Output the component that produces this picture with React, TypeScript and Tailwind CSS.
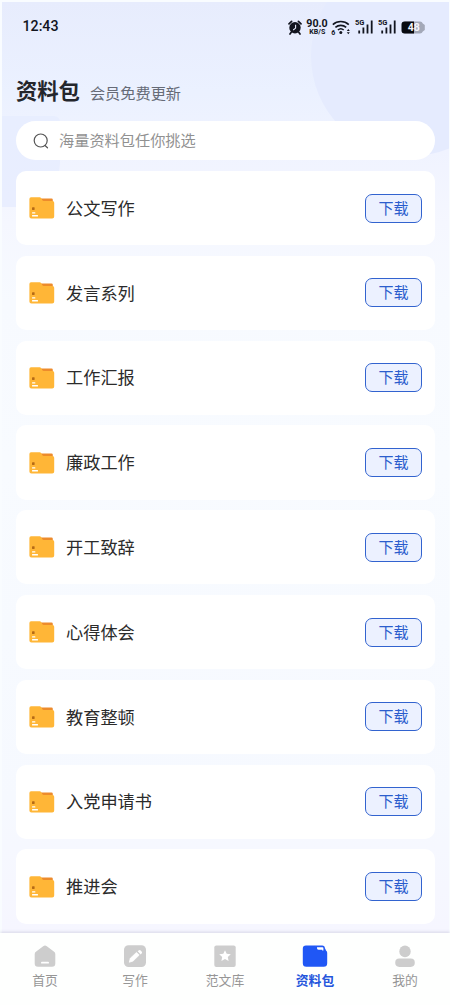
import React from 'react';

// 资料包列表
const packages: string[] = [
  '公文写作',
  '发言系列',
  '工作汇报',
  '廉政工作',
  '开工致辞',
  '心得体会',
  '教育整顿',
  '入党申请书',
  '推进会',
];

interface TabItem {
  label: string;
  icon: React.ReactElement;
  active?: boolean;
}

// 底部导航
const tabs: TabItem[] = [
  {
    label: '首页',
    icon: (
      <svg width="24" height="24" viewBox="0 0 24 24">
        <path d="M10.2 2.2a3 3 0 0 1 3.6 0l7 5.2A3.2 3.2 0 0 1 22.3 10v9.500a3.300 3.300 0 0 1-3.300 3.300H5a3.300 3.300 0 0 1-3.300-3.300V10a3.200 3.200 0 0 1 1.500-2.600z" fill="#cdcdcd" />
        <rect x="8" y="17.800" width="8" height="1.800" rx="0.900" fill="#fff" />
      </svg>
    ),
  },
  {
    label: '写作',
    icon: (
      <svg width="24" height="24" viewBox="0 0 24 24">
        <rect x="1" y="1.300" width="22" height="21.700" rx="4.500" fill="#cdcdcd" />
        <path d="M6.300 18.200l1-3.900 6.200-5.900 2.700 2.700-6.200 6z" fill="#fff" stroke="#fff" strokeWidth="0.800" strokeLinejoin="round" />
        <path d="M14.700 7.300l0.900-0.800a1.500 1.500 0 0 1 2.100 0l0.900 0.900a1.500 1.500 0 0 1 0 2.100l-0.900 0.900z" fill="#fff" />
      </svg>
    ),
  },
  {
    label: '范文库',
    icon: (
      <svg width="24" height="24" viewBox="0 0 24 24">
        <rect x="1.300" y="1.600" width="21.400" height="21.400" rx="2" fill="#cdcdcd" />
        <path d="M12 6.200l1.700 3.600 4.100 0.500-3 2.700 0.800 4.100-3.600-2-3.600 2 0.800-4.100-3-2.700 4.100-0.500z" fill="#fff" />
      </svg>
    ),
  },
  {
    label: '资料包',
    active: true,
    icon: (
      <svg width="26" height="24" viewBox="0 0 26 24">
        <path d="M4 1.500h8.500l3 2.500h6a2.800 2.800 0 0 1 2.500 2.600c0.800 0.500 1.200 1.200 1.200 2.200v10.400a3.500 3.500 0 0 1-3.500 3.500H4.300a3.500 3.500 0 0 1-3.500-3.500V4.700A3.200 3.200 0 0 1 4 1.500z" fill="#2057f5" />
        <path d="M12.500 1.500H20a2.800 2.800 0 0 1 2.900 2.700v3.500h-7z" fill="#2057f5" />
        <path d="M15 3.300h5.400a1 1 0 0 1 1 1v2.300h-1.200v-0.800h-3.400a1.800 1.800 0 0 1-1.800-1.500z" fill="#fff" />
      </svg>
    ),
  },
  {
    label: '我的',
    icon: (
      <svg width="24" height="24" viewBox="0 0 24 24">
        <ellipse cx="12" cy="7.400" rx="5.700" ry="5.900" fill="#cdcdcd" />
        <rect x="2.200" y="14.600" width="19.600" height="8.300" rx="4.100" fill="#cdcdcd" />
      </svg>
    ),
  },
];

const FolderIcon: React.FC = () => (
  <svg className="block shrink-0" width="26" height="22" viewBox="0 0 26 22">
    <path d="M11 1.500h11.500a1.300 1.300 0 0 1 1.300 1.300V6H11z" fill="#ed8b2c" />
    <path d="M2 0.300h8.700c0.700 0 1.100 0.300 1.500 0.900l1.200 2.100c0.300 0.500 0.700 0.700 1.300 0.700H23.500a1.700 1.700 0 0 1 1.700 1.700v13.900a2 2 0 0 1-2 2H2.400a2 2 0 0 1-2-2V2A1.700 1.700 0 0 1 2 0.300z" fill="#ffb637" />
    <rect x="3" y="10.300" width="2.600" height="2.600" rx="0.400" fill="#b56a16" />
    <rect x="3" y="15.200" width="3.400" height="1.400" rx="0.500" fill="#fff" />
    <rect x="3" y="18" width="6" height="1.500" rx="0.500" fill="#fff" />
  </svg>
);

// 5G 信号格
const Signal: React.FC = () => (
  <svg className="block" width="19" height="16" viewBox="0 0 19 16">
    <text x="0" y="6.200" fontSize="7.500" fontWeight="700" fontFamily="Roboto" fill="#12151f">5G</text>
    <path d="M4.200 14.500V11.500M8.400 14.500V8.500M12.500 14.500V5.500M16.700 14.500V1.500" stroke="#12151f" strokeWidth="1.800" />
  </svg>
);

const StatusBar: React.FC = () => (
  <div className="flex h-[50px] items-center justify-between pr-[23px] pl-[20.500px]">
    <span className="text-[14.200px] font-medium text-[#12151f]">12:43</span>
    <div className="flex items-center">
      <svg className="block" width="14" height="15" viewBox="0 0 14 15">
        <circle cx="7" cy="7.800" r="5.700" fill="#12151f" />
        <path d="M1 3.800L3.600 1.300M13 3.800L10.400 1.300M3.200 12.300L2 14M10.800 12.300L12 14" stroke="#12151f" strokeWidth="1.700" strokeLinecap="round" />
        <path d="M7.600 4.700v3.400L5.200 10" stroke="#e8edfd" strokeWidth="1.100" fill="none" />
      </svg>
      <svg className="ml-[3px] block" width="24" height="16" viewBox="0 0 24 16" fontWeight="700" fontFamily="Roboto" fill="#12151f">
        <text x="12" y="8.300" textAnchor="middle" fontSize="10" textLength="21.500" lengthAdjust="spacingAndGlyphs">90.0</text>
        <text x="12.300" y="14.800" textAnchor="middle" fontSize="6.500" textLength="16" lengthAdjust="spacingAndGlyphs">KB/S</text>
      </svg>
      <svg className="ml-[2px] block" width="20" height="16" viewBox="0 0 20 16">
        <path d="M1.800 5.600a12 12 0 0 1 16 0M4.400 8.400a8.200 8.200 0 0 1 10.800 0M6.900 11a4.400 4.400 0 0 1 5.800 0" stroke="#12151f" strokeWidth="1.600" fill="none" />
        <circle cx="9.800" cy="13.500" r="1.500" fill="#12151f" />
        <text x="0.200" y="15.500" fontSize="7" fontWeight="700" fontFamily="Roboto" fill="#12151f">6</text>
        <path d="M15.800 12l1.500-2 1.500 2zM15.800 13.200l1.500 2 1.500-2z" fill="#12151f" />
      </svg>
      <div className="ml-[4px] flex gap-[4px]">
        <Signal />
        <Signal />
      </div>
      <svg className="ml-[4px] block" width="25" height="13" viewBox="0 0 25 13">
        <path d="M3.500 0.500H19a3 3 0 0 1 2.800 2l2 1.500v5l-2 1.500a3 3 0 0 1-2.800 2H3.500z" fill="#a3a8b8" />
        <path d="M3.500 0.500H13v12H3.500a3 3 0 0 1-3-3v-6a3 3 0 0 1 3-3z" fill="#080a10" />
        <text x="12.800" y="10.300" textAnchor="middle" fontSize="10.500" fontWeight="700" fontFamily="Roboto" fill="#f3f5fc">48</text>
      </svg>
    </div>
  </div>
);

const PackageCard: React.FC<{ title: string }> = ({ title }) => (
  <div className="flex h-[74.250px] shrink-0 items-center rounded-[10px] bg-white pr-[13px] pl-[13px]">
    <FolderIcon />
    <span className="ml-[11px] flex-1 pt-[1.500px] text-[17.200px] leading-6 text-[#2b2b2b]">{title}</span>
    <button className="flex h-[29px] w-[57px] items-center justify-center rounded-[7px] border border-[#3263cf] bg-[#ecf1ff] pt-[2px] text-[15px] leading-none text-[#2b5dcd]">
      下载
    </button>
  </div>
);

const App: React.FC = () => {
  return (
    <div className="h-[1005px] w-[450px] overflow-hidden bg-[#f9fcff] pt-[2px] pr-px pl-[2px] font-[Roboto,'Noto_Sans_CJK_SC',sans-serif]">
      <div className="relative flex h-full flex-col bg-[linear-gradient(180deg,#e7ecfd_0px,#ebf1ff_90px,#f0f3ff_150px,#f5f7ff_220px,#f7faff_300px,#f8fbff_460px,#f6f9ff_800px,#f6f6ff_930px)]">
        {/* 背景装饰 */}
        <div className="absolute inset-0 overflow-hidden">
          <div className="absolute top-[-46px] left-[309px] h-[200px] w-[200px] rounded-full bg-[#e5ebfe]" />
          <div className="absolute top-[114px] left-0 h-[91px] w-[58px] rounded-tr-[6px] rounded-br-[44px] bg-linear-to-b from-[#e8eeff] to-[#e9eeff]" />
        </div>

        <div className="relative flex min-h-0 flex-1 flex-col">
          <StatusBar />
          <div className="flex h-[69px] items-center pt-[9px] pl-[14px]">
            <h1 className="pt-px text-[21.300px] leading-8 font-bold text-[#24262c]">资料包</h1>
            <span className="mt-[5px] ml-[10px] text-[15.200px] leading-6 text-[#666b77]">会员免费更新</span>
          </div>
          {/* 搜索框 */}
          <div className="mr-[14px] ml-[14px] flex h-[39px] shrink-0 items-center rounded-full bg-white pl-[17px]">
            <svg className="block" width="16" height="16" viewBox="0 0 16 16" fill="none" stroke="#555" strokeWidth="1.200" strokeLinecap="round">
              <circle cx="7.700" cy="7.500" r="6.500" />
              <path d="M12 12.500l2.500 2.300" />
            </svg>
            <span className="ml-[10px] pt-px text-[15.200px] leading-6 text-[#919191]">海量资料包任你挑选</span>
          </div>
          <div className="mt-[11px] mr-[14px] ml-[14px] flex flex-col gap-[10.550px]">
            {packages.map((title) => (
              <PackageCard key={title} title={title} />
            ))}
          </div>
        </div>

        <nav className="relative -mr-px -ml-[2px] flex h-[72px] shrink-0 bg-[#fefffe] shadow-[0_-1px_3px_rgba(90,90,130,0.2)]">
          {tabs.map((tab) => (
            <div key={tab.label} className="flex flex-1 flex-col items-center pt-[11px]">
              {tab.icon}
              <span
                className={
                  tab.active
                    ? 'mt-[3px] text-[12.800px] leading-[19px] font-bold text-[#2455dc]'
                    : 'mt-[3px] text-[12.800px] leading-[19px] text-[#969696]'
                }
              >
                {tab.label}
              </span>
            </div>
          ))}
        </nav>
      </div>
    </div>
  );
};

export default App;
